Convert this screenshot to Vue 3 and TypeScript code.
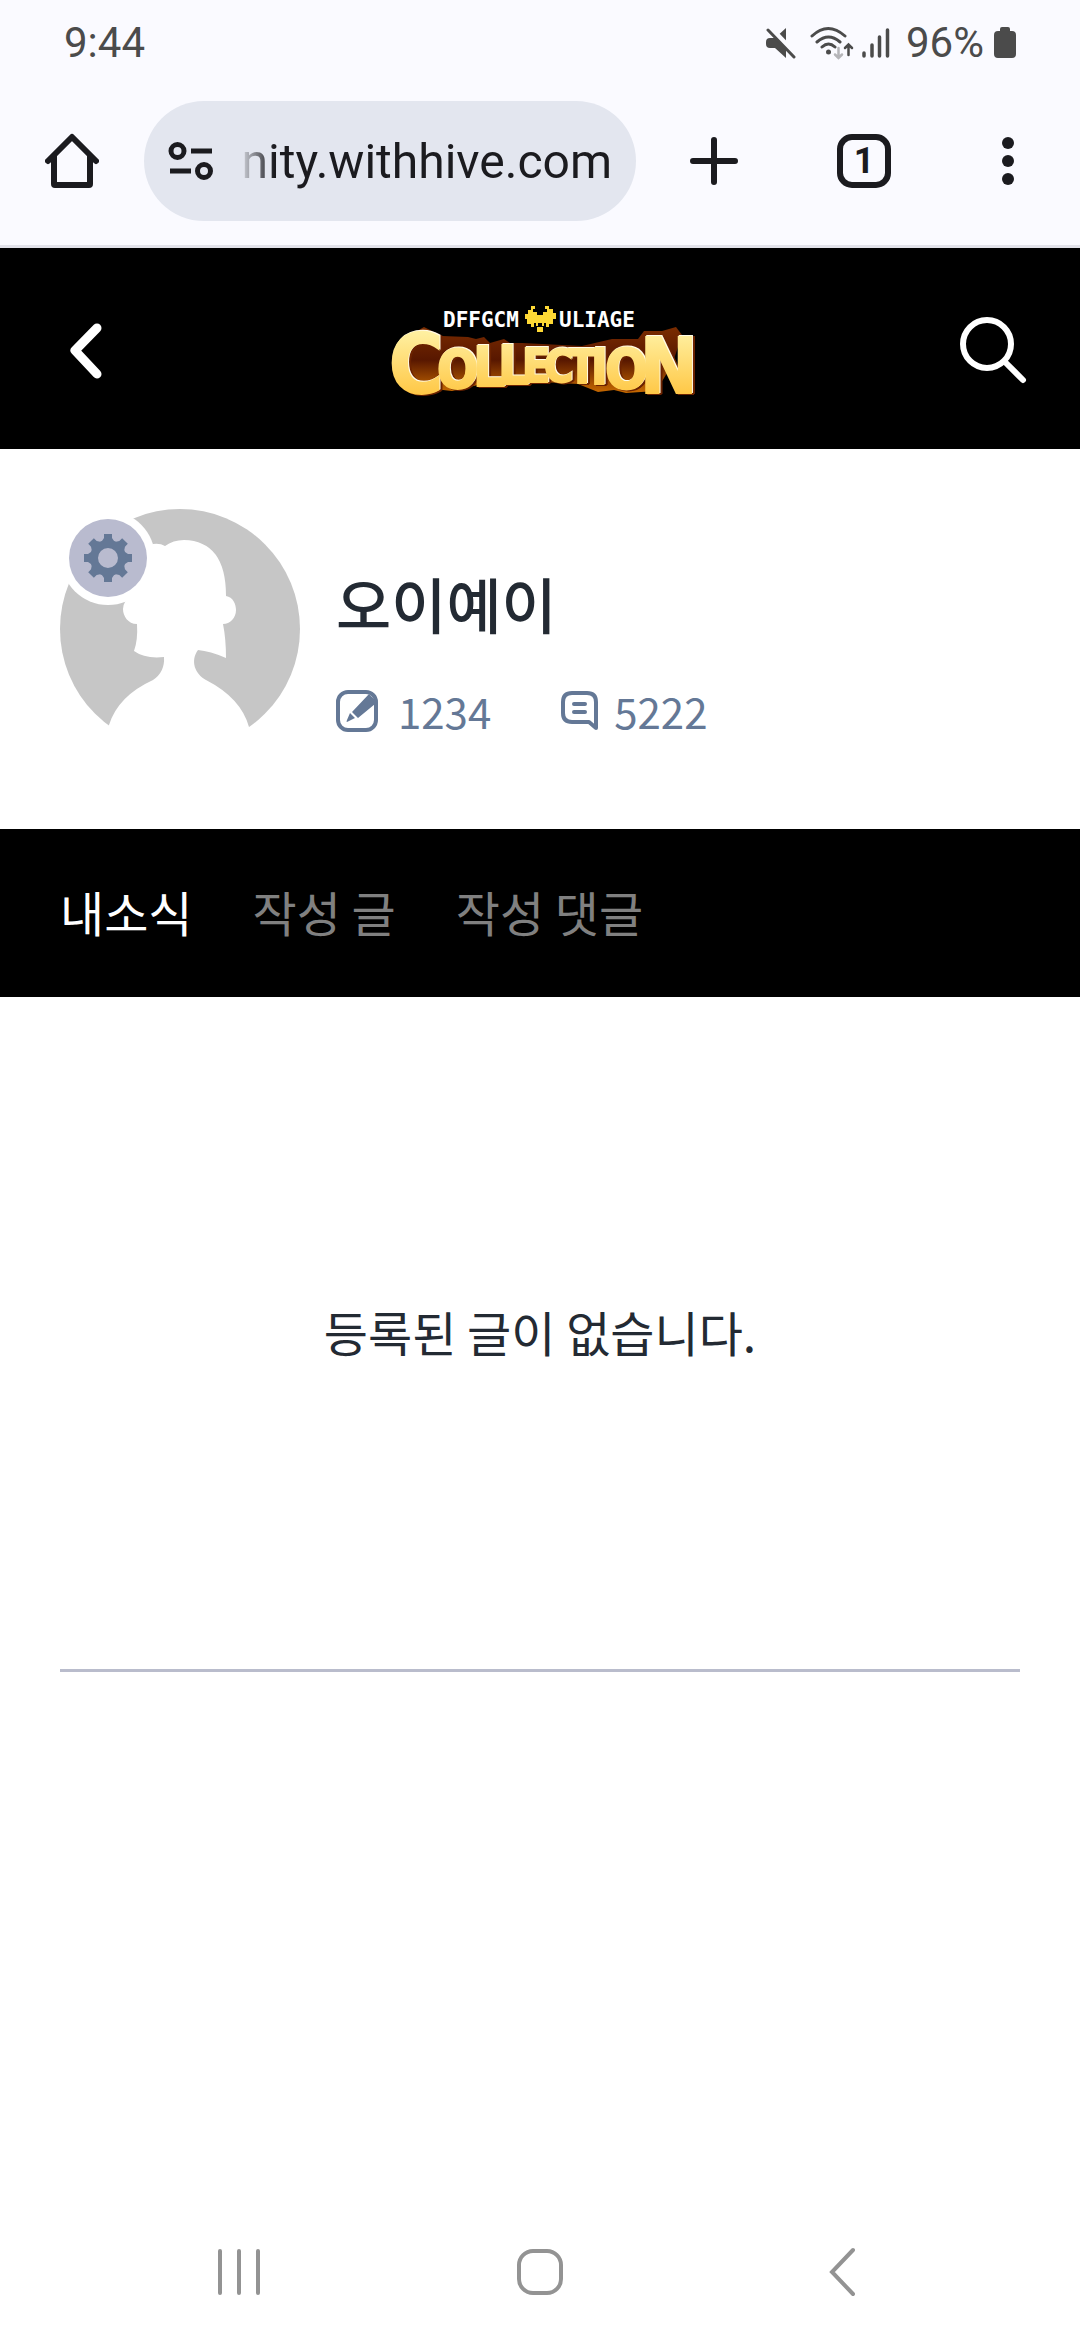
<script setup lang="ts">
import { ref } from 'vue'

interface LogoLetter {
  char: string
  x: number
  y: number
  size: number
}

const address = ref('nity.withhive.com')
const tabs: string[] = ['내소식', '작성 글', '작성 댓글']
const activeTab = ref(0)

const logoLetters: LogoLetter[] = [
  { char: 'C', x: 9, y: 102, size: 82 },
  { char: 'O', x: 57, y: 97, size: 54 },
  { char: 'L', x: 93, y: 95, size: 56 },
  { char: 'L', x: 118, y: 93, size: 54 },
  { char: 'E', x: 142, y: 91, size: 46 },
  { char: 'C', x: 164, y: 91, size: 44 },
  { char: 'T', x: 188, y: 92, size: 46 },
  { char: 'I', x: 211, y: 93, size: 50 },
  { char: 'O', x: 225, y: 97, size: 56 },
  { char: 'N', x: 260, y: 102, size: 76 },
]
</script>

<template>
  <div class="screen">
    <div class="browser">
      <div class="status">
        <span class="clock">9:44</span>
        <div class="indicators">
          <svg class="mute" width="30" height="32" viewBox="0 0 30 32" aria-hidden="true">
            <path d="M0 15q0-4 4-4h5L20 1v30L9 21H4q-4 0-4-4z" fill="#4b4b4b" />
            <path d="M3 0l27 28" stroke="#fafaff" stroke-width="6" />
            <path d="M2 3l26 27" stroke="#4b4b4b" stroke-width="3" stroke-linecap="round" />
          </svg>
          <svg class="wifi" width="44" height="34" viewBox="0 0 44 34" fill="none" stroke-linecap="round" aria-hidden="true">
            <g stroke="#4b4b4b" stroke-width="3">
              <path d="M2 10q16-15 33 0M7 16q11.500-10 23 0M12 21q6.500-6 13 0" />
              <path d="M38.500 29V19M35 22l3.500-3.500L42 22" stroke-width="2.500" />
            </g>
            <circle cx="18.500" cy="26" r="2.500" fill="#4b4b4b" />
            <path d="M28.500 22v10M25 28.500l3.500 3.500L32 28.500" stroke="#b5b5b9" stroke-width="2.500" />
          </svg>
          <svg class="signal" width="28" height="32" viewBox="0 0 28 32" aria-hidden="true">
            <path d="M2 26v3M10 18v11M17.500 10v19M25.500 3v26" stroke="#4b4b4b" stroke-width="3.500" stroke-linecap="round" />
          </svg>
          <span class="percent">96%</span>
          <svg width="22" height="32" viewBox="0 0 22 32" aria-hidden="true">
            <path d="M6 2q0-2 2-2h6q2 0 2 2v2h2q4 0 4 4v19q0 4-4 4H4q-4 0-4-4V8q0-4 4-4h2z" fill="#4b4b4b" />
          </svg>
        </div>
      </div>

      <div class="toolbar">
        <button type="button" aria-label="홈">
          <svg width="54" height="56" viewBox="0 0 54 56" fill="none" stroke="#1b1b1f" stroke-width="6" stroke-linecap="round" stroke-linejoin="round" aria-hidden="true">
            <path d="M3 28L27 4l24 24M9 23v28q0 1 1 1h34q1 0 1-1V23" />
          </svg>
        </button>
        <div class="address">
          <svg width="46" height="40" viewBox="0 0 46 40" fill="none" stroke="#1b1b1f" stroke-width="5" aria-hidden="true">
            <circle cx="9.500" cy="10" r="6.500" />
            <circle cx="36" cy="30" r="6.500" />
            <path d="M23 10h21M2 30h21" />
          </svg>
          <input v-model="address" type="text" aria-label="주소" />
        </div>
        <button type="button" class="wide" aria-label="새 탭">
          <svg width="48" height="48" viewBox="0 0 48 48" stroke="#1b1b1f" stroke-width="6" stroke-linecap="round" aria-hidden="true">
            <path d="M24 3v42M3 24h42" />
          </svg>
        </button>
        <button type="button" aria-label="탭 1개"><span class="tab-count">1</span></button>
        <button type="button" aria-label="메뉴">
          <svg width="12" height="48" viewBox="0 0 12 48" fill="#1b1b1f" aria-hidden="true">
            <circle cx="6" cy="6" r="6" /><circle cx="6" cy="24" r="6" /><circle cx="6" cy="42" r="6" />
          </svg>
        </button>
      </div>
    </div>

    <header class="site-header">
      <button type="button" class="back" aria-label="뒤로">
        <svg width="32" height="56" viewBox="0 0 32 56" fill="none" stroke="#fff" stroke-width="9" stroke-linecap="round" stroke-linejoin="round" aria-hidden="true">
          <path d="M27 5L5 27.500 27 51" />
        </svg>
      </button>
      <a href="#" aria-label="Collection">
        <svg width="320" height="120" viewBox="0 0 320 120">
          <defs>
            <linearGradient id="gold" gradientUnits="userSpaceOnUse" x1="0" y1="36" x2="0" y2="106">
              <stop offset="0" stop-color="#fff3a8" />
              <stop offset="1" stop-color="#ffc642" />
            </linearGradient>
            <linearGradient id="rust" x1="0" y1="0" x2="0" y2="1">
              <stop offset="0" stop-color="#7a2c00" />
              <stop offset="0.500" stop-color="#581700" />
              <stop offset="1" stop-color="#c86a00" />
            </linearGradient>
          </defs>
          <path d="M30 44l14-8 18 9 26 1 8 2 8-2 6 6 14-4 6 4 12 0 60 3 30-7 26 0 6-8 18 0 14-4 6 8-10 30-16 26-30 2-12-3-16 2-20-8-54-3-46 4-26 6-18-2-8 2-16-6-10-20z" fill="url(#rust)" />
          <text class="logo-word">
            <tspan
              v-for="(letter, index) in logoLetters"
              :key="index"
              :x="letter.x"
              :y="letter.y"
              :font-size="letter.size"
            >{{ letter.char }}</tspan>
          </text>
          <g class="logo-small">
            <text x="63" y="36">DFFGCM</text>
            <text x="179" y="36">ULIAGE</text>
          </g>
          <path d="M151 15h4v3h-2v3h4v3h6v-3h4v-3h-2v-3h4v3h4v4h3v6h-3v5h-4v3h-3v-4h-2v3h-2v-3h-4v3h-2v-3h-2v4h-3v-3h-4v-5h-2v-5h3v-4h3zM157 36h6v5h-6z" fill="#fdd835" />
        </svg>
      </a>
      <button type="button" class="search" aria-label="검색">
        <svg width="68" height="68" viewBox="0 0 68 68" fill="none" stroke="#fff" stroke-width="6" stroke-linecap="round" aria-hidden="true">
          <circle cx="27" cy="27" r="24" /><path d="M45 45l18 18" />
        </svg>
      </button>
    </header>

    <section class="profile">
      <div class="avatar">
        <svg width="240" height="240" viewBox="0 0 240 240" aria-hidden="true">
          <circle cx="120" cy="120" r="120" fill="#c6c6c6" />
          <path
            d="M65 93L93 35Q100 34 105 37Q113 31 124 31Q166 32 166 87C173 88 176 95 176 101C176 109 170 115 163 115Q166 130 166 149Q150 142 138 141C130 152 135 165 146 171Q181 189 189 218L189 240H49L49 216Q58 187 93 171Q105 163 104 148Q85 150 74 142Q78 131 77 115C68 115 63 107 63 100Q63 96 65 93Z"
            fill="#fff"
          />
          <circle cx="48" cy="49" r="47" fill="#fff" />
        </svg>
        <button type="button" class="settings" aria-label="설정">
          <svg width="48" height="48" viewBox="-24 -24 48 48" aria-hidden="true">
            <g fill="#647896">
              <path v-for="n in 8" :key="n" d="M-4-24h8v4l4 6H-8l4-6z" :transform="`rotate(${n * 45})`" />
            </g>
            <circle r="14" fill="none" stroke="#647896" stroke-width="8" />
          </svg>
        </button>
      </div>
      <div class="identity">
        <h1>오이예이</h1>
        <div class="stats">
          <span class="posts">
            <svg width="42" height="42" viewBox="0 0 42 42" aria-hidden="true">
              <rect x="2" y="2" width="38" height="38" rx="10" fill="none" stroke="#647896" stroke-width="4" />
              <path d="M33 4l6 6v4L22 28l-6-6zM14 23l5 5-8 4q-1 0 0-2z" fill="#647896" />
            </svg>
            1234
          </span>
          <span class="comments">
            <svg width="37" height="42" viewBox="0 0 37 42" fill="none" stroke="#647896" stroke-width="4" stroke-linejoin="round" stroke-linecap="round" aria-hidden="true">
              <path d="M35 38l-7-6H11q-9 0-9-9V12q0-9 9-9h15q9 0 9 9zM13 14h11M13 22h11" />
            </svg>
            5222
          </span>
        </div>
      </div>
    </section>

    <nav class="tabs">
      <button
        v-for="(tab, index) in tabs"
        :key="tab"
        type="button"
        :class="{ active: index === activeTab }"
        @click="activeTab = index"
      >
        {{ tab }}
      </button>
    </nav>

    <main>
      <p class="empty">등록된 글이 없습니다.</p>
    </main>

    <nav class="system-nav">
      <button type="button" aria-label="최근 앱">
        <svg width="44" height="48" viewBox="0 0 44 48" stroke="#939393" stroke-width="4" stroke-linecap="round" aria-hidden="true">
          <path d="M3 3v42M22 3v42M41 3v42" />
        </svg>
      </button>
      <button type="button" aria-label="홈 화면">
        <svg width="48" height="48" viewBox="0 0 48 48" aria-hidden="true">
          <rect x="3" y="3" width="42" height="42" rx="14" fill="none" stroke="#939393" stroke-width="4" />
        </svg>
      </button>
      <button type="button" aria-label="이전">
        <svg width="28" height="50" viewBox="0 0 28 50" fill="none" stroke="#939393" stroke-width="4" stroke-linecap="round" aria-hidden="true">
          <path d="M26 3L5 25l21 22" />
        </svg>
      </button>
    </nav>
  </div>
</template>

<style>
body {
  background: #fff;
}
</style>

<style scoped>
.screen {
  display: flex;
  flex-direction: column;
  min-height: 100vh;
  background: #fff;
  color: #232a33;
  font-family: "Noto Sans CJK KR", sans-serif;
}

svg {
  display: block;
  flex: none;
}

button {
  display: flex;
  align-items: center;
  justify-content: center;
  margin: 0;
  padding: 0;
  border: 0;
  background: none;
  color: inherit;
  font: inherit;
}

.browser {
  border-bottom: 3px solid #e2e2ea;
  background: #fafaff;
  font-family: Roboto, sans-serif;
}

.status {
  display: flex;
  align-items: center;
  justify-content: space-between;
  height: 85px;
  padding: 0 64px;
  color: #4b4b4b;
  font-size: 42px;
}

.indicators {
  display: flex;
  align-items: center;
}

.mute {
  margin-right: 14px;
}

.wifi {
  margin-right: 8px;
}

.signal {
  margin-right: 16px;
}

.percent {
  margin-right: 10px;
}

.toolbar {
  display: flex;
  height: 152px;
  padding-bottom: 8px;
  align-items: center;
}

.toolbar button {
  width: 144px;
  height: 144px;
}

.toolbar .wide {
  width: 156px;
}

.address {
  display: flex;
  flex: 1;
  align-items: center;
  gap: 24px;
  min-width: 0;
  height: 120px;
  padding: 0 24px;
  border-radius: 60px;
  background: #e3e6ef;
}

.address input {
  flex: 1;
  min-width: 0;
  padding: 0;
  border: 0;
  outline: 0;
  background: none;
  color: #1b1b1f;
  font: 48px Roboto, sans-serif;
  text-align: right;
  mask-image: linear-gradient(to right, transparent, #000 36px);
}

.tab-count {
  display: flex;
  align-items: center;
  justify-content: center;
  box-sizing: border-box;
  width: 54px;
  height: 54px;
  border: 6px solid #1b1b1f;
  border-radius: 15px;
  color: #1b1b1f;
  font-size: 36px;
  font-weight: 700;
}

.site-header {
  display: grid;
  grid-template-columns: 1fr auto 1fr;
  align-items: center;
  box-sizing: border-box;
  height: 201px;
  padding-top: 4px;
  background: #000;
}

.back {
  justify-self: start;
  margin-left: 70px;
}

.search {
  justify-self: end;
  margin-right: 52px;
}

.logo-word {
  fill: url(#gold);
  stroke: url(#gold);
  stroke-width: 2px;
  font-family: "Liberation Sans Narrow", "DejaVu Sans Condensed", sans-serif;
  font-weight: 700;
  filter: drop-shadow(1px -1px 0 #fffbe6) drop-shadow(2px 1px 0 #6b2200);
}

.logo-small {
  fill: #fff;
  font: 700 21px "DejaVu Sans Mono", monospace;
}

.profile {
  display: flex;
  align-items: flex-start;
  gap: 36px;
  height: 320px;
  padding: 60px 60px 0;
}

.avatar {
  position: relative;
}

.settings {
  position: absolute;
  top: 10px;
  left: 9px;
  width: 78px;
  height: 78px;
  border-radius: 50%;
  background: #b9bbcf;
}

.identity {
  display: flex;
  flex-direction: column;
  gap: 36px;
  padding-top: 52px;
}

h1 {
  margin: 0;
  font-size: 60px;
  font-weight: 500;
  line-height: 84px;
}

.stats {
  display: flex;
  gap: 70px;
  color: #647896;
  font-size: 42px;
  line-height: 60px;
}

.stats span {
  display: flex;
  align-items: center;
}

.posts {
  gap: 20px;
}

.comments {
  gap: 16px;
}

.tabs {
  display: flex;
  align-items: center;
  gap: 60px;
  height: 164px;
  padding: 0 60px 4px;
  background: #000;
  color: #808080;
  font-size: 48px;
}

.tabs .active {
  color: #fff;
}

main {
  flex: 1;
  padding: 0 60px;
}

.empty {
  margin: 0;
  padding: 298px 0 302px;
  border-bottom: 3px solid #b9bccc;
  font-size: 48px;
  line-height: 72px;
  text-align: center;
}

.system-nav {
  display: grid;
  grid-template-columns: repeat(3, 1fr);
  height: 136px;
  padding: 0 88px;
}
</style>
